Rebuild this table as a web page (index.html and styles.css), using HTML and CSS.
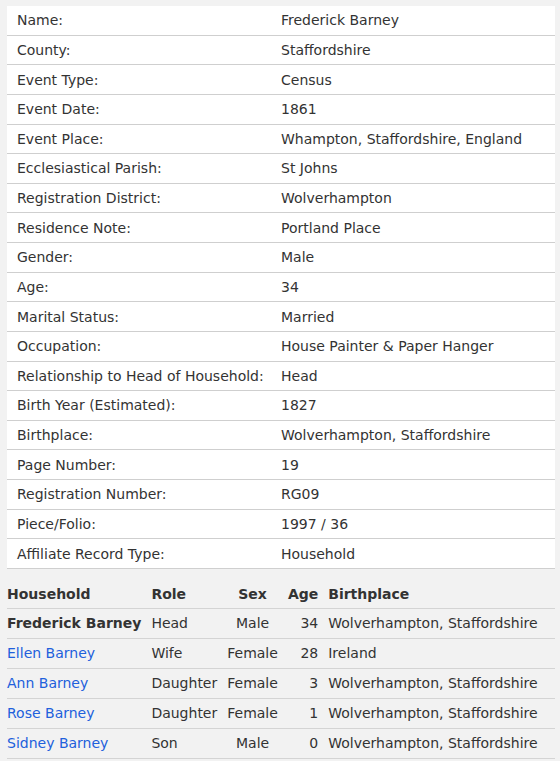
FILE: index.html
```html
<!DOCTYPE html>
<html lang="en">
<head>
<meta charset="utf-8">
<title>Record</title>
<link rel="stylesheet" href="styles.css">
</head>
<body>
<div class="page">
  <div class="details">
    <div class="row"><span class="label">Name:</span><span class="value">Frederick Barney</span></div>
    <div class="row"><span class="label">County:</span><span class="value">Staffordshire</span></div>
    <div class="row"><span class="label">Event Type:</span><span class="value">Census</span></div>
    <div class="row"><span class="label">Event Date:</span><span class="value">1861</span></div>
    <div class="row"><span class="label">Event Place:</span><span class="value">Whampton, Staffordshire, England</span></div>
    <div class="row"><span class="label">Ecclesiastical Parish:</span><span class="value">St Johns</span></div>
    <div class="row"><span class="label">Registration District:</span><span class="value">Wolverhampton</span></div>
    <div class="row"><span class="label">Residence Note:</span><span class="value">Portland Place</span></div>
    <div class="row"><span class="label">Gender:</span><span class="value">Male</span></div>
    <div class="row"><span class="label">Age:</span><span class="value">34</span></div>
    <div class="row"><span class="label">Marital Status:</span><span class="value">Married</span></div>
    <div class="row"><span class="label">Occupation:</span><span class="value">House Painter &amp; Paper Hanger</span></div>
    <div class="row"><span class="label">Relationship to Head of Household:</span><span class="value">Head</span></div>
    <div class="row"><span class="label">Birth Year (Estimated):</span><span class="value">1827</span></div>
    <div class="row"><span class="label">Birthplace:</span><span class="value">Wolverhampton, Staffordshire</span></div>
    <div class="row"><span class="label">Page Number:</span><span class="value">19</span></div>
    <div class="row"><span class="label">Registration Number:</span><span class="value">RG09</span></div>
    <div class="row"><span class="label">Piece/Folio:</span><span class="value">1997 / 36</span></div>
    <div class="row"><span class="label">Affiliate Record Type:</span><span class="value">Household</span></div>
  </div>

  <table class="household">
    <thead>
      <tr>
        <th class="c-name">Household</th>
        <th class="c-role">Role</th>
        <th class="c-sex">Sex</th>
        <th class="c-age">Age</th>
        <th class="c-place">Birthplace</th>
      </tr>
    </thead>
    <tbody>
      <tr>
        <td class="c-name"><strong>Frederick Barney</strong></td>
        <td class="c-role">Head</td>
        <td class="c-sex">Male</td>
        <td class="c-age">34</td>
        <td class="c-place">Wolverhampton, Staffordshire</td>
      </tr>
      <tr>
        <td class="c-name"><a href="#">Ellen Barney</a></td>
        <td class="c-role">Wife</td>
        <td class="c-sex">Female</td>
        <td class="c-age">28</td>
        <td class="c-place">Ireland</td>
      </tr>
      <tr>
        <td class="c-name"><a href="#">Ann Barney</a></td>
        <td class="c-role">Daughter</td>
        <td class="c-sex">Female</td>
        <td class="c-age">3</td>
        <td class="c-place">Wolverhampton, Staffordshire</td>
      </tr>
      <tr>
        <td class="c-name"><a href="#">Rose Barney</a></td>
        <td class="c-role">Daughter</td>
        <td class="c-sex">Female</td>
        <td class="c-age">1</td>
        <td class="c-place">Wolverhampton, Staffordshire</td>
      </tr>
      <tr>
        <td class="c-name"><a href="#">Sidney Barney</a></td>
        <td class="c-role">Son</td>
        <td class="c-sex">Male</td>
        <td class="c-age">0</td>
        <td class="c-place">Wolverhampton, Staffordshire</td>
      </tr>
    </tbody>
  </table>
</div>
</body>
</html>
```

FILE: styles.css
```css
html, body {
  margin: 0;
  padding: 0;
  background: #f2f2f2;
}

body {
  font-family: "DejaVu Sans", Verdana, sans-serif;
  font-size: 14px;
  color: #333333;
}

.page {
  padding: 6px 5px 0 7px;
}

.details {
  background: #ffffff;
}

.row {
  display: grid;
  grid-template-columns: 264px 1fr;
  align-items: center;
  height: 29.63px;
  box-sizing: border-box;
  padding-left: 10px;
  border-bottom: 1px solid #cfcfcf;
  line-height: 16px;
}

.household {
  width: 100%;
  margin-top: 10px;
  border-collapse: collapse;
}

.household th,
.household td {
  padding: 6px 5px;
  line-height: 17px;
  border-bottom: 1px solid #d4d4d4;
  white-space: nowrap;
  text-align: left;
  vertical-align: middle;
}

.household th {
  font-weight: bold;
  padding-top: 7px;
  padding-bottom: 5px;
}

.household .c-name {
  padding-left: 0;
}

.household .c-sex {
  text-align: center;
}

.household .c-age {
  text-align: right;
}

.household .c-place {
  width: 100%;
}

.household a {
  color: #2160dc;
  text-decoration: none;
}

.household strong {
  font-weight: bold;
}
```
